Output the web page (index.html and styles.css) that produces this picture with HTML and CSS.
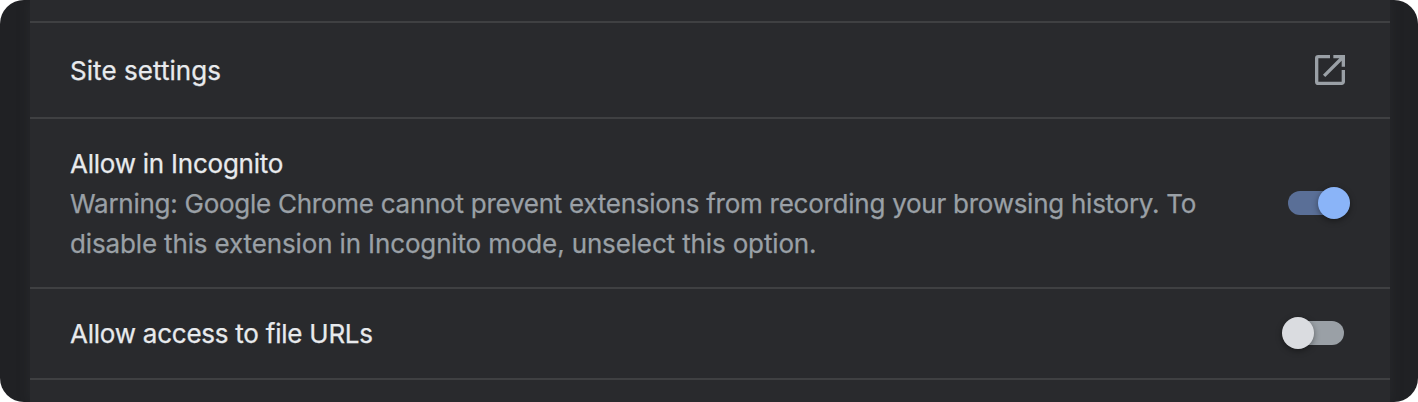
FILE: index.html
```html
<!DOCTYPE html>
<html lang="en">
<head>
    <meta charset="UTF-8">
    <meta name="viewport" content="width=device-width, initial-scale=1.0">
    <title>Extension Settings</title>
    <link rel="stylesheet" href="styles.css">
</head>
<body>
    <div class="window">
        <div class="card">
            <div class="row site-settings">
                <div class="label">
                    <div class="title">Site settings</div>
                </div>
                <svg class="open-icon" viewBox="0 0 24 24">
                    <path d="M19 19H5V5h7V3H5a2 2 0 0 0-2 2v14a2 2 0 0 0 2 2h14c1.1 0 2-.9 2-2v-7h-2v7zM14 3v2h3.59l-9.83 9.83 1.41 1.41L19 6.41V10h2V3h-7z"/>
                </svg>
            </div>
            <div class="row incognito">
                <div class="label">
                    <div class="title">Allow in Incognito</div>
                    <div class="warning">Warning: Google Chrome cannot prevent extensions from recording your browsing history. To</div>
                    <div class="warning last">disable this extension in Incognito mode, unselect this option.</div>
                </div>
                <div class="toggle on"><span class="knob"></span></div>
            </div>
            <div class="row file-urls">
                <div class="label">
                    <div class="title">Allow access to file URLs</div>
                </div>
                <div class="toggle"><span class="knob"></span></div>
            </div>
        </div>
    </div>
</body>
</html>
```

FILE: styles.css
```css
body {
    margin: 0;
    background-color: #fff;
    font-family: Inter, "Liberation Sans", sans-serif;
    font-size: 26px;
    line-height: 40px;
}

.window {
    height: 402px;
    padding: 0 28px 0 30px;
    background-color: #202124;
    border-radius: 24px;
    box-sizing: border-box;
    overflow: hidden;
}

.card {
    height: 402px;
    padding-top: 21px;
    background-color: #292a2d;
    box-shadow: 0 0 12px rgba(60, 64, 67, 0.3);
    box-sizing: border-box;
}

.row {
    display: flex;
    align-items: center;
    justify-content: space-between;
    padding: 0 40px;
    border-top: 2px solid #3f4042;
    box-sizing: border-box;
}

.site-settings {
    height: 96px;
}

.incognito {
    height: 170px;
}

.file-urls {
    height: 93px;
    padding-bottom: 1px;
    border-bottom: 2px solid #3f4042;
}

.label {
    padding-top: 2px;
    white-space: nowrap;
    -webkit-text-stroke-width: 0.25px;
}

.title {
    color: #e8eaed;
    letter-spacing: -0.24px;
}

.site-settings .title {
    letter-spacing: 0.06px;
}

.warning {
    color: #9aa0a6;
    letter-spacing: -0.26px;
}

.warning.last {
    letter-spacing: -0.14px;
}

.open-icon {
    width: 40px;
    height: 40px;
    fill: #9aa0a6;
}

.toggle {
    display: flex;
    align-items: center;
    width: 56px;
    height: 24px;
    margin-right: 6px;
    background-color: #9aa0a6;
    border-radius: 12px;
}

.knob {
    flex-shrink: 0;
    width: 32px;
    height: 32px;
    margin-left: -6px;
    background-color: #dadce0;
    border-radius: 50%;
    box-shadow: 0 2px 6px rgba(0, 0, 0, 0.4);
}

.toggle.on {
    background-color: #5a6f97;
}

.toggle.on .knob {
    margin-left: 30px;
    background-color: #8ab4f8;
}
```
